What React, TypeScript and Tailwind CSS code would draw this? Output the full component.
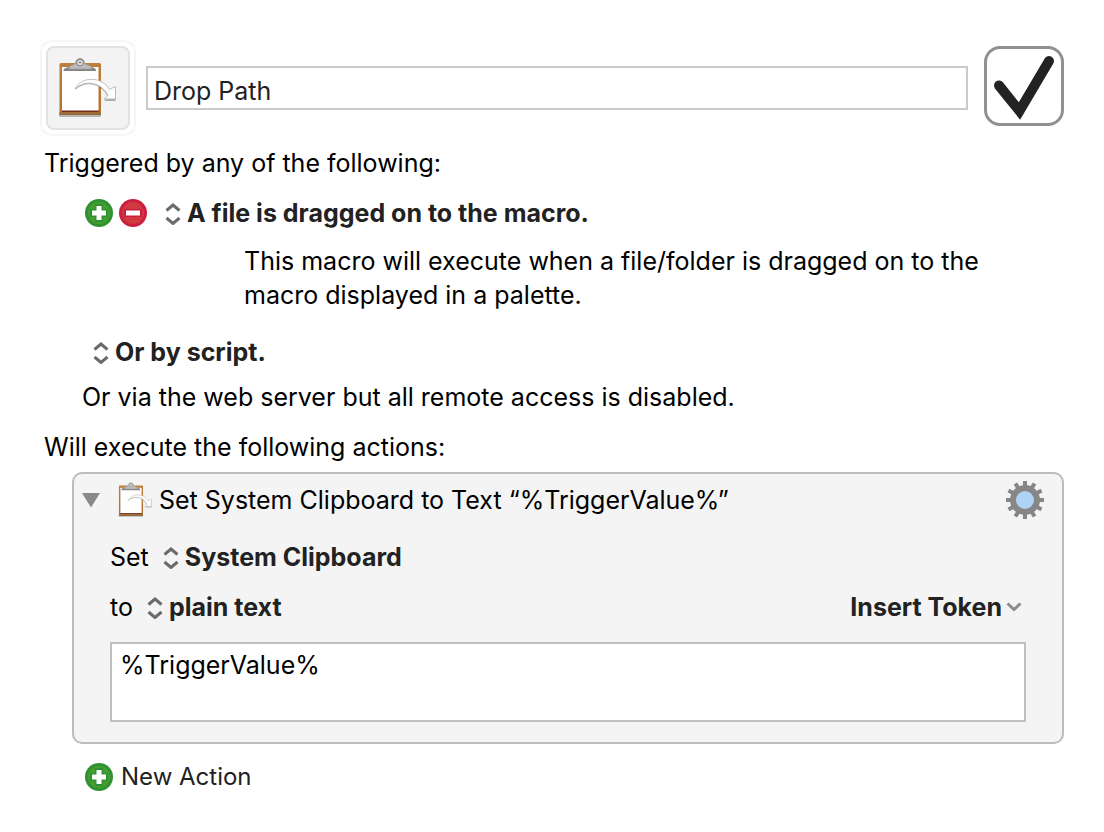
import { useId, useState } from 'react';

function ClipboardIcon({ className = '' }: { className?: string }) {
  const id = useId();
  return (
    <svg viewBox="0 0 60 62" className={className} aria-hidden="true">
      <defs>
        <linearGradient id={id} x1="0" y1="0" x2="0" y2="1">
          <stop offset="0" stopColor="#bd7f3c" />
          <stop offset="0.93" stopColor="#b3722f" />
          <stop offset="1" stopColor="#7a3d1c" />
        </linearGradient>
      </defs>
      <rect x="1" y="56" width="42" height="4" rx="1.500" fill="#000" opacity="0.25" />
      <rect x="1.500" y="6" width="41.500" height="52" rx="1.500" fill={`url(#${id})`} />
      <path d="M1.500 56.500h41.500" stroke="#9c7140" strokeWidth="2.500" />
      <path d="M4 54h36.500" stroke="#5e1a12" strokeWidth="1.500" />
      <rect x="4" y="10" width="36.500" height="43.500" fill="#fff" />
      <path d="M5.500 14c0-3 3-4 8-4h17c5 0 7.500 1 7.500 4z" fill="#858585" />
      <path d="M11 11C12 7 16 9 17.500 6c0-6 9-6 9 0 1.500 3 6 1 7 5v1H11z" fill="#bdbdbd" stroke="#999" strokeWidth="0.8" />
      <circle cx="22" cy="5.500" r="3.200" fill="#e4e4e4" stroke="#8a8a8a" strokeWidth="1.200" />
      <circle cx="22" cy="5.500" r="1.100" fill="#777" />
      <path
        d="M17 33c8-14 28-11 34.500 1.500l6-3V44H46l4-3.500C45 28 29 22 17 33z"
        fill="#666"
        opacity="0.5"
      />
      <path
        d="M17 32c7-14 28-12 34.500.5l6-3V42H46l4-3.500C45 27 28 21 17 32z"
        fill="#fff"
        stroke="#b0b0b0"
        strokeWidth="0.8"
      />
    </svg>
  );
}

function PlusIcon() {
  return (
    <svg viewBox="0 0 28 28" className="size-7" aria-hidden="true">
      <circle cx="14" cy="14" r="14" fill="#2f9232" />
      <circle cx="14" cy="14" r="11" fill="#489d30" />
      <path d="M14 5v18M5 14h18" stroke="#2f9232" strokeWidth="8" />
      <path d="M14 7v14M7 14h14" stroke="#fff" strokeWidth="5" />
    </svg>
  );
}

function MinusIcon() {
  return (
    <svg viewBox="0 0 28 28" className="size-7" aria-hidden="true">
      <circle cx="14" cy="14" r="14" fill="#cc1f3f" />
      <circle cx="14" cy="14" r="11" fill="#d23a42" />
      <path d="M5 14h18" stroke="#cc1f3f" strokeWidth="8" />
      <path d="M7 14h14" stroke="#fff" strokeWidth="5" />
    </svg>
  );
}

function GearIcon() {
  return (
    <svg viewBox="0 0 38 38" className="size-[38px]" aria-hidden="true">
      {[0, 30, 60, 90, 120, 150].map((angle) => (
        <path key={angle} d="M19 0v38" stroke="#868686" strokeWidth="4" transform={`rotate(${angle} 19 19)`} />
      ))}
      <circle cx="19" cy="19" r="15" fill="#868686" />
      <circle cx="19" cy="19" r="9" fill="#afd3f4" />
    </svg>
  );
}

function PopUp({ label, options }: { label: string; options: string[] }) {
  return (
    <div className="flex items-center gap-[6px]">
      <svg viewBox="0 0 16 22" className="w-4 h-[22px] mt-[2px] shrink-0" fill="none" stroke="#6b6b6b" strokeWidth="3" aria-hidden="true">
        <path d="M1.500 7.500 8 2l6.500 5.500M1.500 15 8 20.500l6.500-5.500" />
      </svg>
      <select aria-label={label} className="appearance-none bg-transparent font-bold text-[#222] outline-none">
        {options.map((option) => (
          <option key={option}>{option}</option>
        ))}
      </select>
    </div>
  );
}

export default function App() {
  const [name, setName] = useState('Drop Path');
  const [enabled, setEnabled] = useState(true);
  const [text, setText] = useState('%TriggerValue%');

  return (
    <main className="min-h-screen bg-white pt-10 px-10 pb-10 font-['Inter',sans-serif] text-[25px] leading-[34px] text-black">
      <header className="flex items-center">
        <button type="button" aria-label="Macro icon" className="size-24 shrink-0 rounded-xl border-2 border-[#f6f6f6] p-1">
          <span className="flex size-full items-center justify-center rounded-lg border-2 border-[#e2e2e2] bg-[#f3f3f3]">
            <ClipboardIcon className="w-[60px] h-[62px]" />
          </span>
        </button>
        <input
          type="text"
          aria-label="Macro name"
          value={name}
          onChange={(e) => setName(e.target.value)}
          className="ml-[10px] mr-4 h-11 min-w-0 flex-1 border-2 border-[#cacaca] bg-white px-[6px] pt-[6px] text-[#222] outline-none"
        />
        <label className="relative mb-1 size-20 shrink-0">
          <input
            type="checkbox"
            aria-label="Enabled"
            checked={enabled}
            onChange={(e) => setEnabled(e.target.checked)}
            className="block size-full appearance-none rounded-2xl border-[3px] border-[#909090] bg-white"
          />
          {enabled && (
            <svg viewBox="0 0 80 80" className="pointer-events-none absolute inset-0 size-full" aria-hidden="true">
              <path d="M15 39.500 35.500 65 65 15" fill="none" stroke="#222423" strokeWidth="10" strokeLinecap="round" strokeMiterlimit="10" />
            </svg>
          )}
        </label>
      </header>

      <section className="mt-[10px] pl-1">
        <h2>Triggered by any of the following:</h2>

        <div className="mt-4 flex items-center pl-[41px]">
          <button type="button" aria-label="Add trigger" className="mr-[6px]">
            <PlusIcon />
          </button>
          <button type="button" aria-label="Remove trigger" className="mr-[18px]">
            <MinusIcon />
          </button>
          <PopUp label="Trigger" options={['A file is dragged on to the macro.']} />
        </div>
        <p className="mt-[14px] max-w-[960px] pl-[200px]">
          This macro will execute when a file/folder is dragged on to the macro displayed in a palette.
        </p>

        <div className="mt-[23px] pl-[49px]">
          <PopUp label="Script trigger" options={['Or by script.']} />
        </div>
        <p className="mt-[11px] pl-[38px]">Or via the web server but all remote access is disabled.</p>
      </section>

      <section className="mt-4">
        <h2 className="pl-1">Will execute the following actions:</h2>

        <article className="mt-2 ml-8 rounded-[10px] border-2 border-[#bcbcbc] bg-[#f4f4f4] pt-[7px] pb-5 pr-9 pl-9">
          <div className="-mr-[18px] -ml-7 flex items-center">
            <button type="button" aria-label="Collapse action" className="mr-[18px]">
              <svg viewBox="0 0 18 16" className="w-[18px] h-4" aria-hidden="true">
                <path d="M0 1h18L9 15.500z" fill="#8a8a8a" />
              </svg>
            </button>
            <ClipboardIcon className="mr-[6px] h-9 w-[35px]" />
            <h3 className="flex-1">Set System Clipboard to Text “%TriggerValue%”</h3>
            <button type="button" aria-label="Action options">
              <GearIcon />
            </button>
          </div>

          <div className="mt-[21px] flex items-center gap-[14px]">
            <span>Set</span>
            <PopUp label="Clipboard" options={['System Clipboard']} />
          </div>

          <div className="mt-4 flex items-center gap-[14px]">
            <span>to</span>
            <PopUp label="Text style" options={['plain text']} />
            <button type="button" className="mr-1 ml-auto flex items-center gap-1 font-bold text-[#222]">
              Insert Token
              <svg viewBox="0 0 16 10" className="w-4 h-[10px]" fill="none" stroke="#8b8b8b" strokeWidth="3" aria-hidden="true">
                <path d="m1.500 1.500 6.500 6 6.500-6" />
              </svg>
            </button>
          </div>

          <textarea
            aria-label="Clipboard text"
            value={text}
            onChange={(e) => setText(e.target.value)}
            className="mt-[18px] block h-20 w-full resize-none border-2 border-[#c0c0c0] bg-white px-2 pt-1 outline-none"
          />
        </article>

        <button type="button" className="mt-4 ml-[45px] flex items-center gap-2 text-2xl leading-[34px] text-[#222]">
          <PlusIcon />
          New Action
        </button>
      </section>
    </main>
  );
}
